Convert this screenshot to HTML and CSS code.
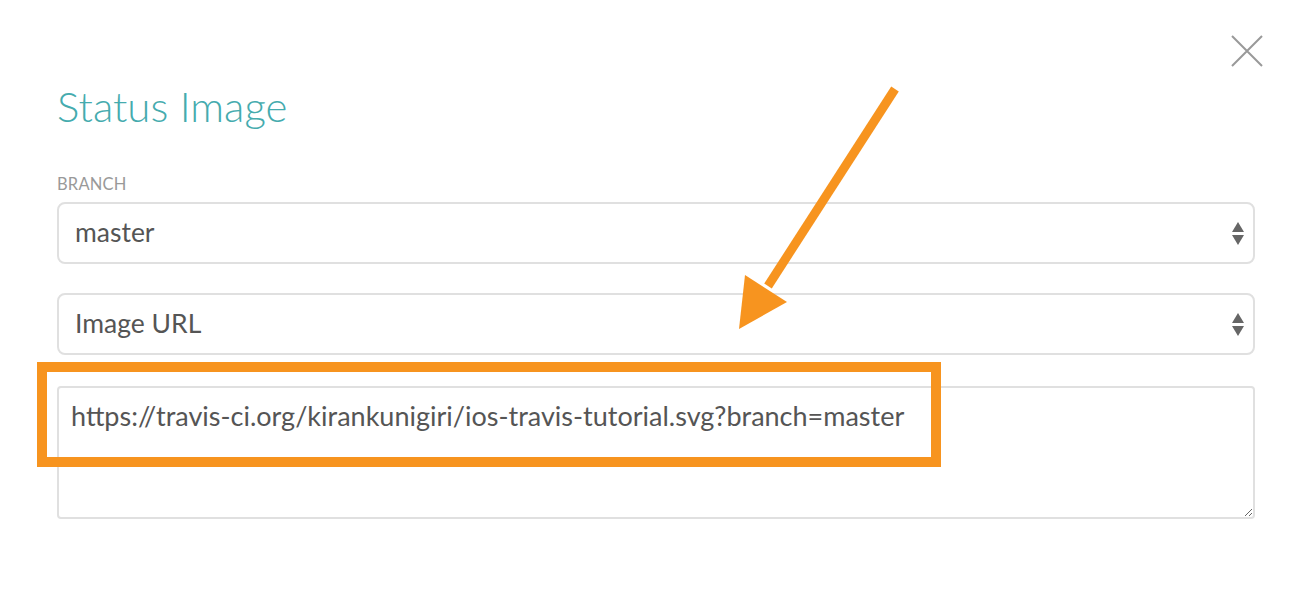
FILE: index.html
```html
<!DOCTYPE html>
<html>
<head>
<meta charset="utf-8">
<link rel="stylesheet" href="styles.css">
</head>
<body>
<div class="modal">
  <button class="close" aria-label="Close">
    <svg width="32" height="32" viewBox="0 0 32 32"><path d="M1 1 L31 31 M31 1 L1 31" stroke="#999" stroke-width="2" fill="none"/></svg>
  </button>
  <h1 class="title">Status Image</h1>
  <label class="label">BRANCH</label>
  <div class="select">
    <span class="select-text">master</span>
    <svg class="updown" width="14" height="26" viewBox="0 0 14 26"><path d="M7 1 L13 11 L1 11 Z" fill="#666"/><path d="M1 14 L13 14 L7 24 Z" fill="#666"/></svg>
  </div>
  <div class="select second">
    <span class="select-text">Image URL</span>
    <svg class="updown" width="14" height="26" viewBox="0 0 14 26"><path d="M7 1 L13 11 L1 11 Z" fill="#666"/><path d="M1 14 L13 14 L7 24 Z" fill="#666"/></svg>
  </div>
  <textarea class="url" spellcheck="false">https://travis-ci.org/kirankunigiri/ios-travis-tutorial.svg?branch=master</textarea>
  <div class="highlight"></div>
  <svg class="arrow" width="1308" height="608" viewBox="0 0 1308 608">
    <line x1="895" y1="89" x2="768" y2="286" stroke="#f7941f" stroke-width="9"/>
    <polygon points="745,275 787,302 739,329" fill="#f7941f"/>
  </svg>
</div>
</body>
</html>
```
FILE: styles.css
```css
html, body {
  margin: 0;
  padding: 0;
  background: #fff;
}
body {
  width: 1308px;
  height: 608px;
  overflow: hidden;
  font-family: "Lato", "Open Sans", sans-serif;
}
.modal {
  position: relative;
  padding: 78px 53px 0 57px;
  display: flex;
  flex-direction: column;
}
.close {
  position: absolute;
  top: 35px;
  right: 45px;
  border: 0;
  background: none;
  padding: 0;
  width: 32px;
  height: 32px;
}
.title {
  margin: 0;
  font-weight: 300;
  font-size: 42px;
  line-height: 56px;
  color: #45abae;
}
.label {
  margin-top: 40px;
  font-size: 16.5px;
  line-height: 20px;
  color: #999;
  letter-spacing: 0.2px;
}
.select {
  position: relative;
  margin-top: 8px;
  height: 55px;
  border: 2px solid #e0e0e0;
  border-radius: 8px;
  display: flex;
  align-items: center;
  padding: 0 16px 3px;
  box-sizing: content-box;
}
.select.second {
  margin-top: 29px;
}
.select-text {
  font-size: 26.5px;
  color: #555;
}
.updown {
  position: absolute;
  right: 8px;
  top: 17px;
}
.url {
  margin: 31px 0 0;
  height: 133px;
  box-sizing: border-box;
  border: 2px solid #e0e0e0;
  border-radius: 4px;
  padding: 11px 12px;
  font-family: "Lato", "Open Sans", sans-serif;
  font-size: 27px;
  color: #555;
  resize: vertical;
  outline: none;
}
.highlight {
  position: absolute;
  left: 37px;
  top: 362px;
  width: 904px;
  height: 105px;
  box-sizing: border-box;
  border: 10px solid #f7941f;
}
.arrow {
  position: absolute;
  left: 0;
  top: 0;
  pointer-events: none;
}
```
